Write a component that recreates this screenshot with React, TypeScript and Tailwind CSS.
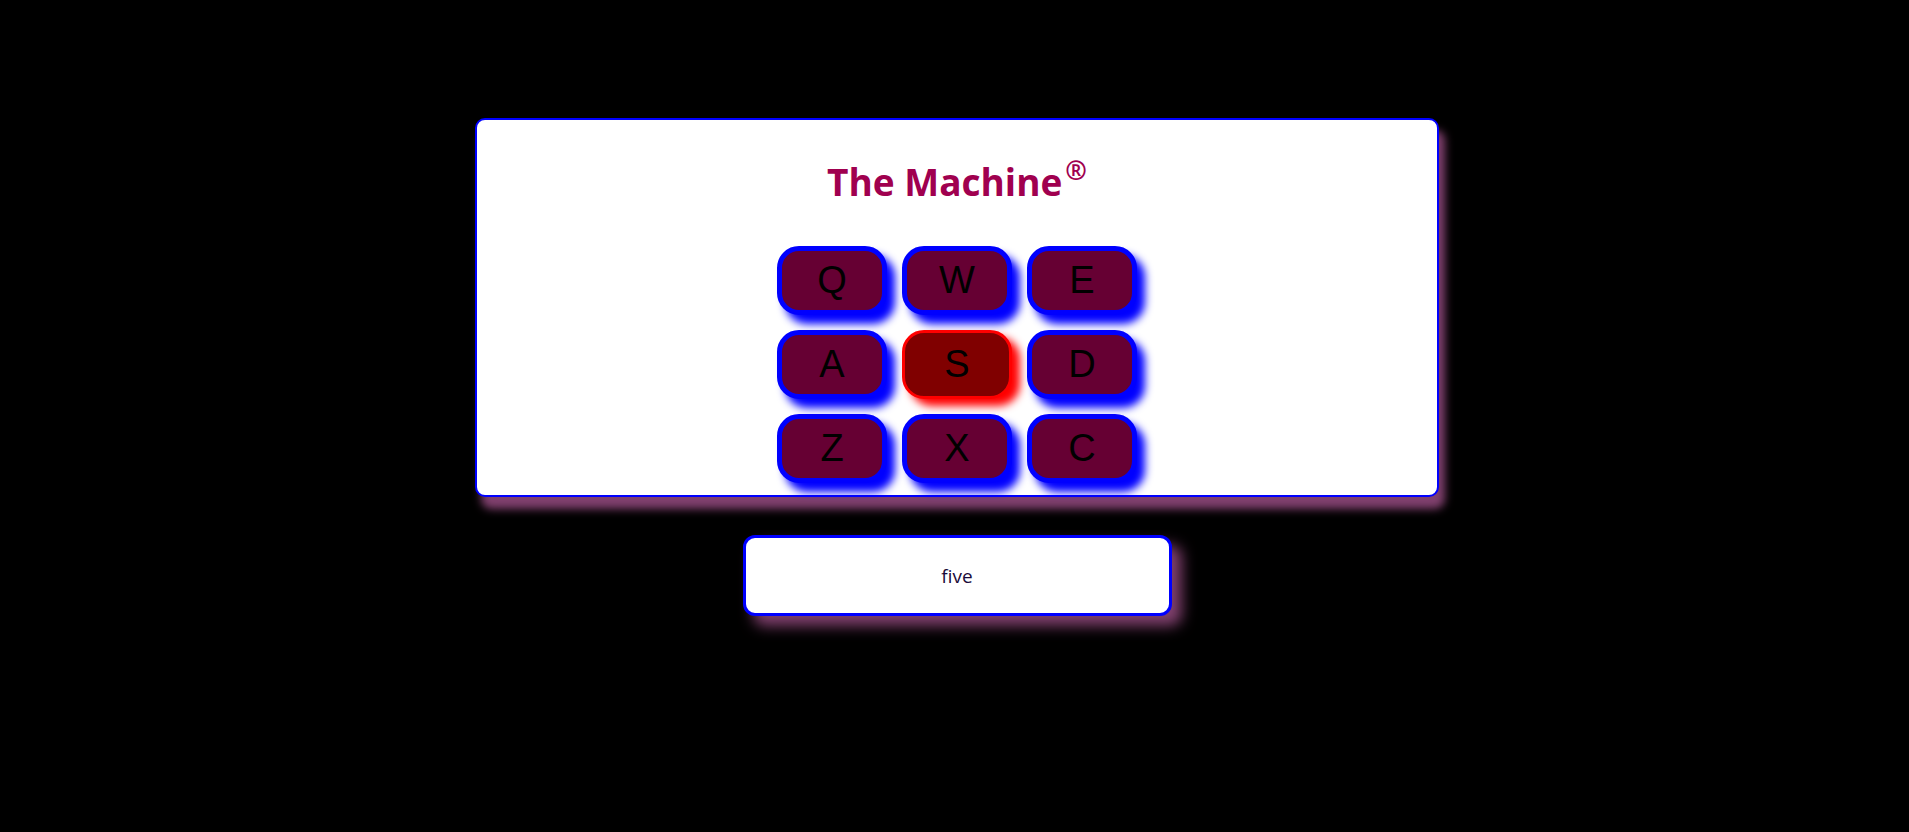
const keys = ["Q", "W", "E", "A", "S", "D", "Z", "X", "C"];

function Key({ label, active }: { label: string; active: boolean }) {
  if (active) {
    return (
      <div className="flex h-[69px] w-[110px] items-center justify-center rounded-[22px] border-[3px] border-[#ff0000] bg-[#800000] text-[38px] text-black shadow-[8px_7px_8px_#ff0000]">
        {label}
      </div>
    );
  }
  return (
    <div className="flex h-[69px] w-[110px] items-center justify-center rounded-[22px] border-[5px] border-[#0000ff] bg-[#660033] text-[38px] text-black shadow-[8px_9px_8px_#0000ff]">
      {label}
    </div>
  );
}

export default function App() {
  return (
    <div className="min-h-screen w-full bg-black pl-[5px] pt-[118px] font-['Liberation_Sans',Arial,sans-serif]">
      <div className="mx-auto w-[964px] rounded-[10px] border-2 border-[#0000ff] bg-white pb-[12px] pt-[34px] shadow-[6px_12px_8px_#80406e]">
        <h1 className="text-center font-['Open_Sans',sans-serif] text-[37px] font-bold leading-[56px] text-[#a0004f]">
          The Machine<sup className="ml-[3px] top-[-0.6em] text-[26px]">®</sup>
        </h1>
        <div className="mx-auto mt-[36px] grid w-[360px] grid-cols-3 gap-[15px]">
          {keys.map((k) => (
            <Key key={k} label={k} active={k === "S"} />
          ))}
        </div>
      </div>
      <div className="mx-auto mt-[38px] flex h-[81px] w-[429px] items-center justify-center rounded-[12px] border-[3px] border-[#0000ff] bg-white pt-[2px] font-['Open_Sans',sans-serif] text-[19px] text-[#1a0a3a] shadow-[10px_10px_14px_#80406e]">
        five
      </div>
    </div>
  );
}
